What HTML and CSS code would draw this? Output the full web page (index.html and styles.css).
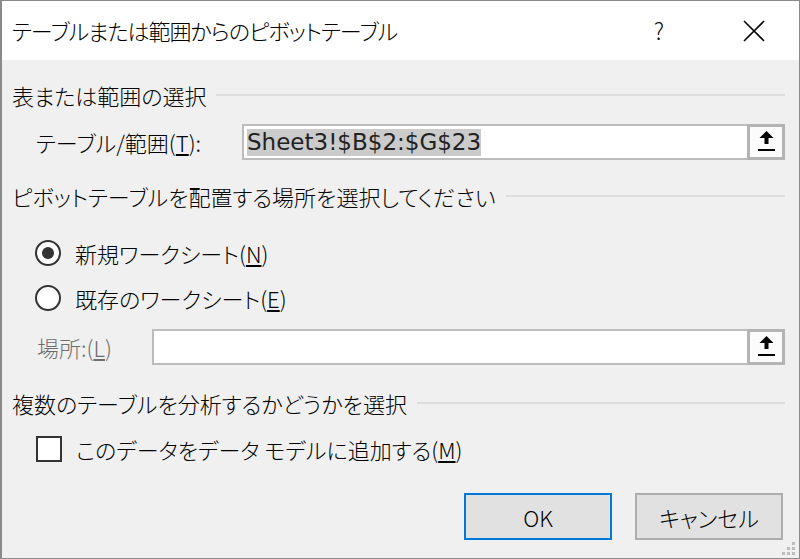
FILE: index.html
```html
<!DOCTYPE html>
<html lang="ja">
<head>
<meta charset="utf-8">
<title>ピボットテーブル</title>
<link rel="stylesheet" href="styles.css">
</head>
<body>
<div class="dialog">
  <div class="titlebar">
    <span class="title">テーブルまたは範囲からのピボットテーブル</span>
    <span class="help">?</span>
    <span class="close">
      <svg width="22" height="22" viewBox="0 0 22 22"><path d="M1 1 L21 21 M21 1 L1 21" stroke="#000" stroke-width="1.6" fill="none"/></svg>
    </span>
  </div>
  <div class="content">
    <div class="group-head"><span class="group-title">表または範囲の選択</span><span class="rule"></span></div>
    <div class="field-row range-row">
      <span class="field-label">テーブル/範囲(<u>T</u>):</span>
      <div class="input">
        <span class="input-text"><span class="sel">Sheet3!$B$2:$G$23</span></span>
        <span class="pick">
          <svg width="17" height="20" viewBox="0 0 17 20"><path d="M8.5 0 L15.5 7 L10.5 7 L10.5 13 L6.5 13 L6.5 7 L1.5 7 Z" fill="#000"/><rect x="0" y="18" width="17" height="2" fill="#000"/></svg>
        </span>
      </div>
    </div>

    <div class="group-head head-2"><span class="group-title">ピボットテーブルを配置する場所を選択してください</span><span class="rule"></span></div>
    <div class="opt opt-1">
      <span class="radio checked"><span class="dot"></span></span>
      <span class="opt-label">新規ワークシート(<u>N</u>)</span>
    </div>
    <div class="opt opt-2">
      <span class="radio"></span>
      <span class="opt-label">既存のワークシート(<u>E</u>)</span>
    </div>
    <div class="field-row place-row">
      <span class="field-label disabled">場所:(<u>L</u>)</span>
      <div class="input">
        <span class="input-text"></span>
        <span class="pick">
          <svg width="17" height="20" viewBox="0 0 17 20"><path d="M8.5 0 L15.5 7 L10.5 7 L10.5 13 L6.5 13 L6.5 7 L1.5 7 Z" fill="#000"/><rect x="0" y="18" width="17" height="2" fill="#000"/></svg>
        </span>
      </div>
    </div>

    <div class="group-head head-3"><span class="group-title">複数のテーブルを分析するかどうかを選択</span><span class="rule"></span></div>
    <div class="opt check-row">
      <span class="checkbox"></span>
      <span class="opt-label">このデータをデータ モデルに追加する(<u>M</u>)</span>
    </div>

    <div class="buttons">
      <button class="btn btn-default">OK</button>
      <button class="btn">キャンセル</button>
    </div>
  </div>
  <svg class="grip" width="16" height="16" viewBox="0 0 16 16">
    <rect x="11" y="1" width="3" height="3" fill="#bdbdbd"/>
    <rect x="6" y="6" width="3" height="3" fill="#bdbdbd"/>
    <rect x="11" y="6" width="3" height="3" fill="#bdbdbd"/>
    <rect x="1" y="11" width="3" height="3" fill="#bdbdbd"/>
    <rect x="6" y="11" width="3" height="3" fill="#bdbdbd"/>
    <rect x="11" y="11" width="3" height="3" fill="#bdbdbd"/>
  </svg>
</div>
</body>
</html>
```
FILE: styles.css
```css
* { box-sizing: border-box; }
html, body { margin: 0; padding: 0; background: #ffffff; }
body {
  font-family: "Noto Sans CJK JP", "Noto Sans", sans-serif;
  font-size: 22px;
  font-weight: 300;
  color: #000;
  font-feature-settings: "palt";
  line-height: 1.3;
}
.dialog {
  width: 800px;
  height: 559px;
  border: 1px solid #8a8a8a;
  border-left-width: 2px;
  display: flex;
  flex-direction: column;
  overflow: hidden;
  position: relative;
  background: #f0f0f0;
}
.titlebar {
  height: 59px;
  flex: none;
  background: #ffffff;
  display: flex;
  align-items: center;
  padding-left: 10px;
}
.title { flex: 1; letter-spacing: -1px; }
.help {
  width: 40px;
  text-align: center;
  font-size: 23px;
  color: #111;
  margin-right: 50px;
}
.close {
  width: 50px;
  display: flex;
  justify-content: center;
  margin-right: 20px;
}
.content {
  flex: 1;
  display: flex;
  flex-direction: column;
  padding: 20px 14px 0 10px;
}
.group-head {
  height: 30px;
  display: flex;
  align-items: center;
  gap: 10px;
  flex: none;
}
.rule {
  flex: 1;
  height: 2px;
  background: #dedede;
}
.head-2 { margin-top: 21px; }
.head-3 { margin-top: 23px; }
.field-row {
  height: 36px;
  display: flex;
  align-items: center;
  flex: none;
}
.range-row { margin-top: 14px; }
.range-row .field-label { margin-left: 24px; width: 206px; }
.place-row { margin-top: 13px; }
.place-row .field-label { margin-left: 25px; width: 115px; }
.field-label.disabled { color: #6d6d6d; }
.input {
  flex: 1;
  height: 36px;
  border: 2px solid #bcbcbc;
  background: #ffffff;
  display: flex;
  align-items: center;
}
.input-text {
  flex: 1;
  padding-left: 3px;
  display: flex;
  align-items: center;
}
.sel {
  font-family: "DejaVu Sans", Verdana, sans-serif;
  font-weight: 400;
  font-size: 23px;
  line-height: 27px;
  background: #cbcbcb;
  color: #222;
  font-feature-settings: normal;
}
.pick {
  width: 38px;
  height: 36px;
  margin: -2px -2px -2px 0;
  border: 3px solid #b4b4b4;
  background: #fbfbfb;
  display: flex;
  align-items: center;
  justify-content: center;
  padding-bottom: 3px;
}
.opt {
  height: 36px;
  display: flex;
  align-items: center;
  flex: none;
  margin-left: 23px;
}
.opt-1 { margin-top: 24px; }
.opt-2 { margin-top: 9px; }
.check-row { margin-top: 13px; margin-left: 24px; }
.radio {
  width: 26px;
  height: 26px;
  border: 2px solid #333333;
  border-radius: 50%;
  background: #ffffff;
  display: flex;
  align-items: center;
  justify-content: center;
  margin-right: 14px;
}
.dot {
  width: 12px;
  height: 12px;
  border-radius: 50%;
  background: #333333;
}
.checkbox {
  width: 26px;
  height: 26px;
  border: 2px solid #333333;
  background: #ffffff;
  margin-right: 14px;
}
.buttons {
  margin-top: 26px;
  display: flex;
  justify-content: flex-end;
  gap: 23px;
  margin-right: 2px;
  flex: none;
}
.btn {
  width: 148px;
  height: 47px;
  border: 2px solid #adadad;
  background: #e1e1e1;
  font-family: "Noto Sans CJK JP", "Noto Sans", sans-serif;
  font-size: 22px;
  font-weight: 300;
  color: #000;
  font-feature-settings: "palt";
  padding: 0;
}
.btn-default { border-color: #0078d7; }
.grip {
  position: absolute;
  right: 2px;
  bottom: 1px;
}
```
